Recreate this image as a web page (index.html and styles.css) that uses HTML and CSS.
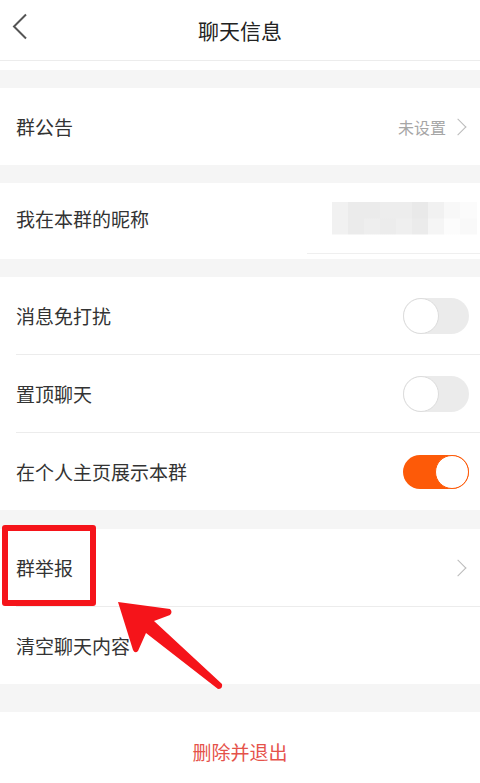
FILE: index.html
```html
<!DOCTYPE html>
<html lang="zh-CN">
<head>
	<meta charset="UTF-8">
	<title>聊天信息</title>
	<meta name="viewport" content="width=device-width,user-scalable=no"/>
	<link rel="stylesheet" href="styles.css">
</head>
<body>
<div class="page">
	<header id="header">
		<a href="javascript:;" class="back">
			<svg width="18" height="28" viewBox="0 0 18 28"><path d="M15 1.5 L3 13.5 L15 25.5" fill="none" stroke="#555" stroke-width="2"/></svg>
		</a>
		<h1>聊天信息</h1>
	</header>
	<div class="topStrip"></div>

	<div class="gap"></div>
	<!-- 群公告 -->
	<ul class="group">
		<li class="row">
			<span class="label">群公告</span>
			<span class="extra">未设置<i class="arrow"></i></span>
		</li>
	</ul>

	<div class="gap"></div>
	<!-- 昵称 -->
	<div class="group nick">
		<div class="row">
			<span class="label">我在本群的昵称</span>
			<span class="blur"></span>
		</div>
		<div class="nickLine"></div>
	</div>

	<div class="gap"></div>
	<!-- 开关 -->
	<ul class="group">
		<li class="row line">
			<span class="label">消息免打扰</span>
			<span class="switch"></span>
		</li>
		<li class="row line">
			<span class="label">置顶聊天</span>
			<span class="switch"></span>
		</li>
		<li class="row">
			<span class="label">在个人主页展示本群</span>
			<span class="switch on"></span>
		</li>
	</ul>

	<div class="gap gap2"></div>
	<ul class="group">
		<li class="row line">
			<span class="label">群举报</span>
			<i class="arrow"></i>
		</li>
		<li class="row">
			<span class="label">清空聊天内容</span>
		</li>
	</ul>

	<div class="gap gap3"></div>
	<a href="javascript:;" class="quit">删除并退出</a>

	<!-- 标注 -->
	<div class="markBox"></div>
	<svg class="markArrow" width="120" height="100" viewBox="0 0 120 100">
		<path d="M2 3 L54 10 Q57 13 54 16 L38 22 L106 85 Q107 90 102 90 L30 34 L22 52 Q19 55 17 51 Z" fill="#f5141a"/>
	</svg>
</div>
</body>
</html>
```

FILE: styles.css
```css
body,
p,
h1 {
	margin: 0;
}

ul {
	margin: 0;
	padding: 0;
	list-style: none;
}

a {
	text-decoration: none;
	-webkit-tap-highlight-color: transparent;
}

body {
	background: #f5f5f5;
	font-family: "Noto Sans CJK SC", "Noto Sans", sans-serif;
}

.page {
	position: relative;
	width: 480px;
	height: 783px;
	overflow: hidden;
	background: #f5f5f5;
}

/* 头部 */
#header {
	display: flex;
	align-items: center;
	justify-content: center;
	position: relative;
	height: 60px;
	border-bottom: 1px solid #ececec;
	background: #fff;
}

#header h1 {
	font-size: 21px;
	font-weight: normal;
	color: #222;
}

.back {
	position: absolute;
	left: 11px;
	top: 13px;
	display: block;
}

.back svg {
	display: block;
}

.topStrip {
	height: 9px;
	background: #fff;
}

.gap {
	height: 18px;
}

.gap2 {
	height: 19px;
}

.gap3 {
	height: 28px;
}

.group {
	background: #fff;
}

.row {
	display: flex;
	align-items: center;
	justify-content: space-between;
	height: 77px;
	margin-left: 16px;
	padding-right: 11px;
}

.row.line {
	border-bottom: 1px solid #ececec;
}

.label {
	font-size: 19px;
	color: #333;
}

.extra {
	display: flex;
	align-items: center;
	font-size: 16px;
	color: #a6a6a6;
}

/* 右箭头 */
.arrow {
	display: block;
	width: 11px;
	height: 11px;
	margin: 0 5px 0 6px;
	border-top: 1.5px solid #bbb;
	border-right: 1.5px solid #bbb;
	transform: rotate(45deg);
}

/* 昵称（打码） */
.nick .row {
	height: 70px;
	padding-right: 3px;
}

.blur {
	width: 145px;
	height: 33px;
	background:
		linear-gradient(90deg, #f1f1f1 0 16px, #ebebeb 16px 48px, #ededed 48px 80px, #e9e9e9 80px 96px, #f1f1f1 96px 112px, #f8f8f8 112px 128px, #fbfbfb 128px) top / 100% 50% no-repeat,
		linear-gradient(90deg, #f1f1f1 0 16px, #ebebeb 16px 32px, #eeeeee 32px 48px, #ececec 48px 64px, #efefef 64px 80px, #ebebeb 80px 96px, #f5f5f5 96px 112px, #fcfcfc 112px 128px, #f9f9f9 128px) bottom / 100% 50% no-repeat;
}

.nickLine {
	height: 5px;
	margin-left: 307px;
	border-top: 1px solid #efefef;
}

/* 开关 */
.switch {
	position: relative;
	display: block;
	box-sizing: border-box;
	width: 66px;
	height: 36px;
	border-radius: 18px;
	background: #ebebeb;
}

.switch:after {
	content: "";
	position: absolute;
	left: 0;
	top: 0;
	box-sizing: border-box;
	width: 36px;
	height: 36px;
	border: 1.5px solid #dcdcdc;
	border-radius: 50%;
	background: #fff;
}

.switch.on {
	height: 34px;
	background: #fd5a08;
}

.switch.on:after {
	left: auto;
	right: 0;
	width: 34px;
	height: 34px;
	border-color: #fd5a08;
}

.quit {
	display: block;
	height: 80px;
	background: #fff;
	font-size: 19px;
	line-height: 80px;
	color: #e5524a;
	text-align: center;
}

/* 红框和箭头标注 */
.markBox {
	position: absolute;
	left: 2px;
	top: 525px;
	width: 82px;
	height: 69px;
	border: 6px solid #f5141a;
	border-radius: 3px;
}

.markArrow {
	position: absolute;
	left: 116px;
	top: 599px;
}
```
